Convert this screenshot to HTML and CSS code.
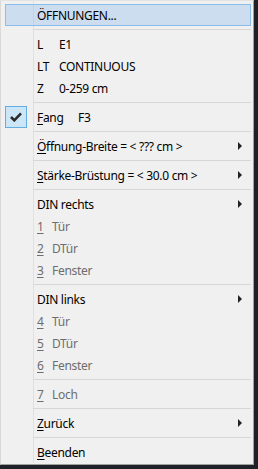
FILE: index.html
```html
<!DOCTYPE html>
<html lang="de">
<head>
    <meta charset="UTF-8">
    <meta name="viewport" content="width=device-width, initial-scale=1.0">
    <title>Öffnungen</title>
    <link rel="stylesheet" href="styles.css">
</head>
<body>
    <div class="menu">
        <div class="item active">ÖFFNUNGEN...</div>
        <div class="sep"></div>

        <div class="item"><span class="key">L</span>E1</div>
        <div class="item"><span class="key">LT</span>CONTINUOUS</div>
        <div class="item"><span class="key">Z</span>0-259 cm</div>
        <div class="sep"></div>

        <div class="item checked">
            <span class="check">
                <svg width="12" height="10" viewBox="0 0 12 10"><path d="M1 5 L4.3 8.3 L11 1.4" fill="none" stroke="#2b2b2b" stroke-width="2.6"/></svg>
            </span>
            <span class="label"><u>F</u>ang</span><span class="accel">F3</span>
        </div>
        <div class="sep"></div>

        <div class="item sub"><span><u>Ö</u>ffnung-Breite = &lt; ??? cm &gt;</span></div>
        <div class="sep"></div>

        <div class="item sub"><span><u>S</u>tärke-Brüstung = &lt; 30.0 cm &gt;</span></div>
        <div class="sep"></div>

        <div class="item sub"><span>DIN rechts</span></div>
        <div class="item off"><u class="num">1</u>Tür</div>
        <div class="item off"><u class="num">2</u>DTür</div>
        <div class="item off"><u class="num">3</u>Fenster</div>
        <div class="sep"></div>

        <div class="item sub"><span>DIN links</span></div>
        <div class="item off"><u class="num">4</u>Tür</div>
        <div class="item off"><u class="num">5</u>DTür</div>
        <div class="item off"><u class="num">6</u>Fenster</div>
        <div class="sep"></div>

        <div class="item off"><u class="num">7</u>Loch</div>
        <div class="sep"></div>

        <div class="item sub"><span><u>Z</u>urück</span></div>
        <div class="sep"></div>

        <div class="item"><u>B</u>eenden</div>
    </div>
</body>
</html>
```

FILE: styles.css
```css
* {
    margin: 0;
    padding: 0;
    box-sizing: border-box;
}

body {
    background: #1e2127;
    width: 258px;
    height: 469px;
    font-family: "Noto Sans", Arial, sans-serif;
    font-size: 12px;
    letter-spacing: -0.3px;
    color: #000;
    overflow: hidden;
}

.menu {
    width: 254px;
    height: 465px;
    padding: 3px 2px 0 4px;
    background: #f0f0f0 linear-gradient(#e0e0e0, #e0e0e0) 32px 0 / 1px 462px no-repeat;
    border: 1px solid #a0a0a0;
    border-top-color: #e4e4e4;
    border-left-color: #d9d9d9;
}

.item {
    position: relative;
    height: 22px;
    display: flex;
    align-items: center;
    padding: 0 9px 0 32px;
    white-space: nowrap;
}

.item u {
    text-underline-offset: 2px;
}

.active {
    background: rgba(120, 180, 235, 0.3);
    border: 1px solid #8cbdea;
    padding-left: 31px;
}

.sep {
    height: 1px;
    margin: 3px 0 3px 28px;
    background: #d7d7d7;
}

.key {
    display: inline-block;
    width: 22px;
}

.label {
    display: inline-block;
    width: 41px;
}

.check {
    position: absolute;
    left: 0;
    top: 0;
    width: 22px;
    height: 22px;
    display: flex;
    align-items: center;
    justify-content: center;
    background: #cde6f7;
    border: 1px solid #62aee4;
}

.sub {
    justify-content: space-between;
}

.sub::after {
    content: "";
    border-left: 4px solid #222;
    border-top: 4px solid transparent;
    border-bottom: 4px solid transparent;
}

.off {
    color: #6d6d6d;
}

.num {
    display: inline-block;
    width: 15px;
}
```
